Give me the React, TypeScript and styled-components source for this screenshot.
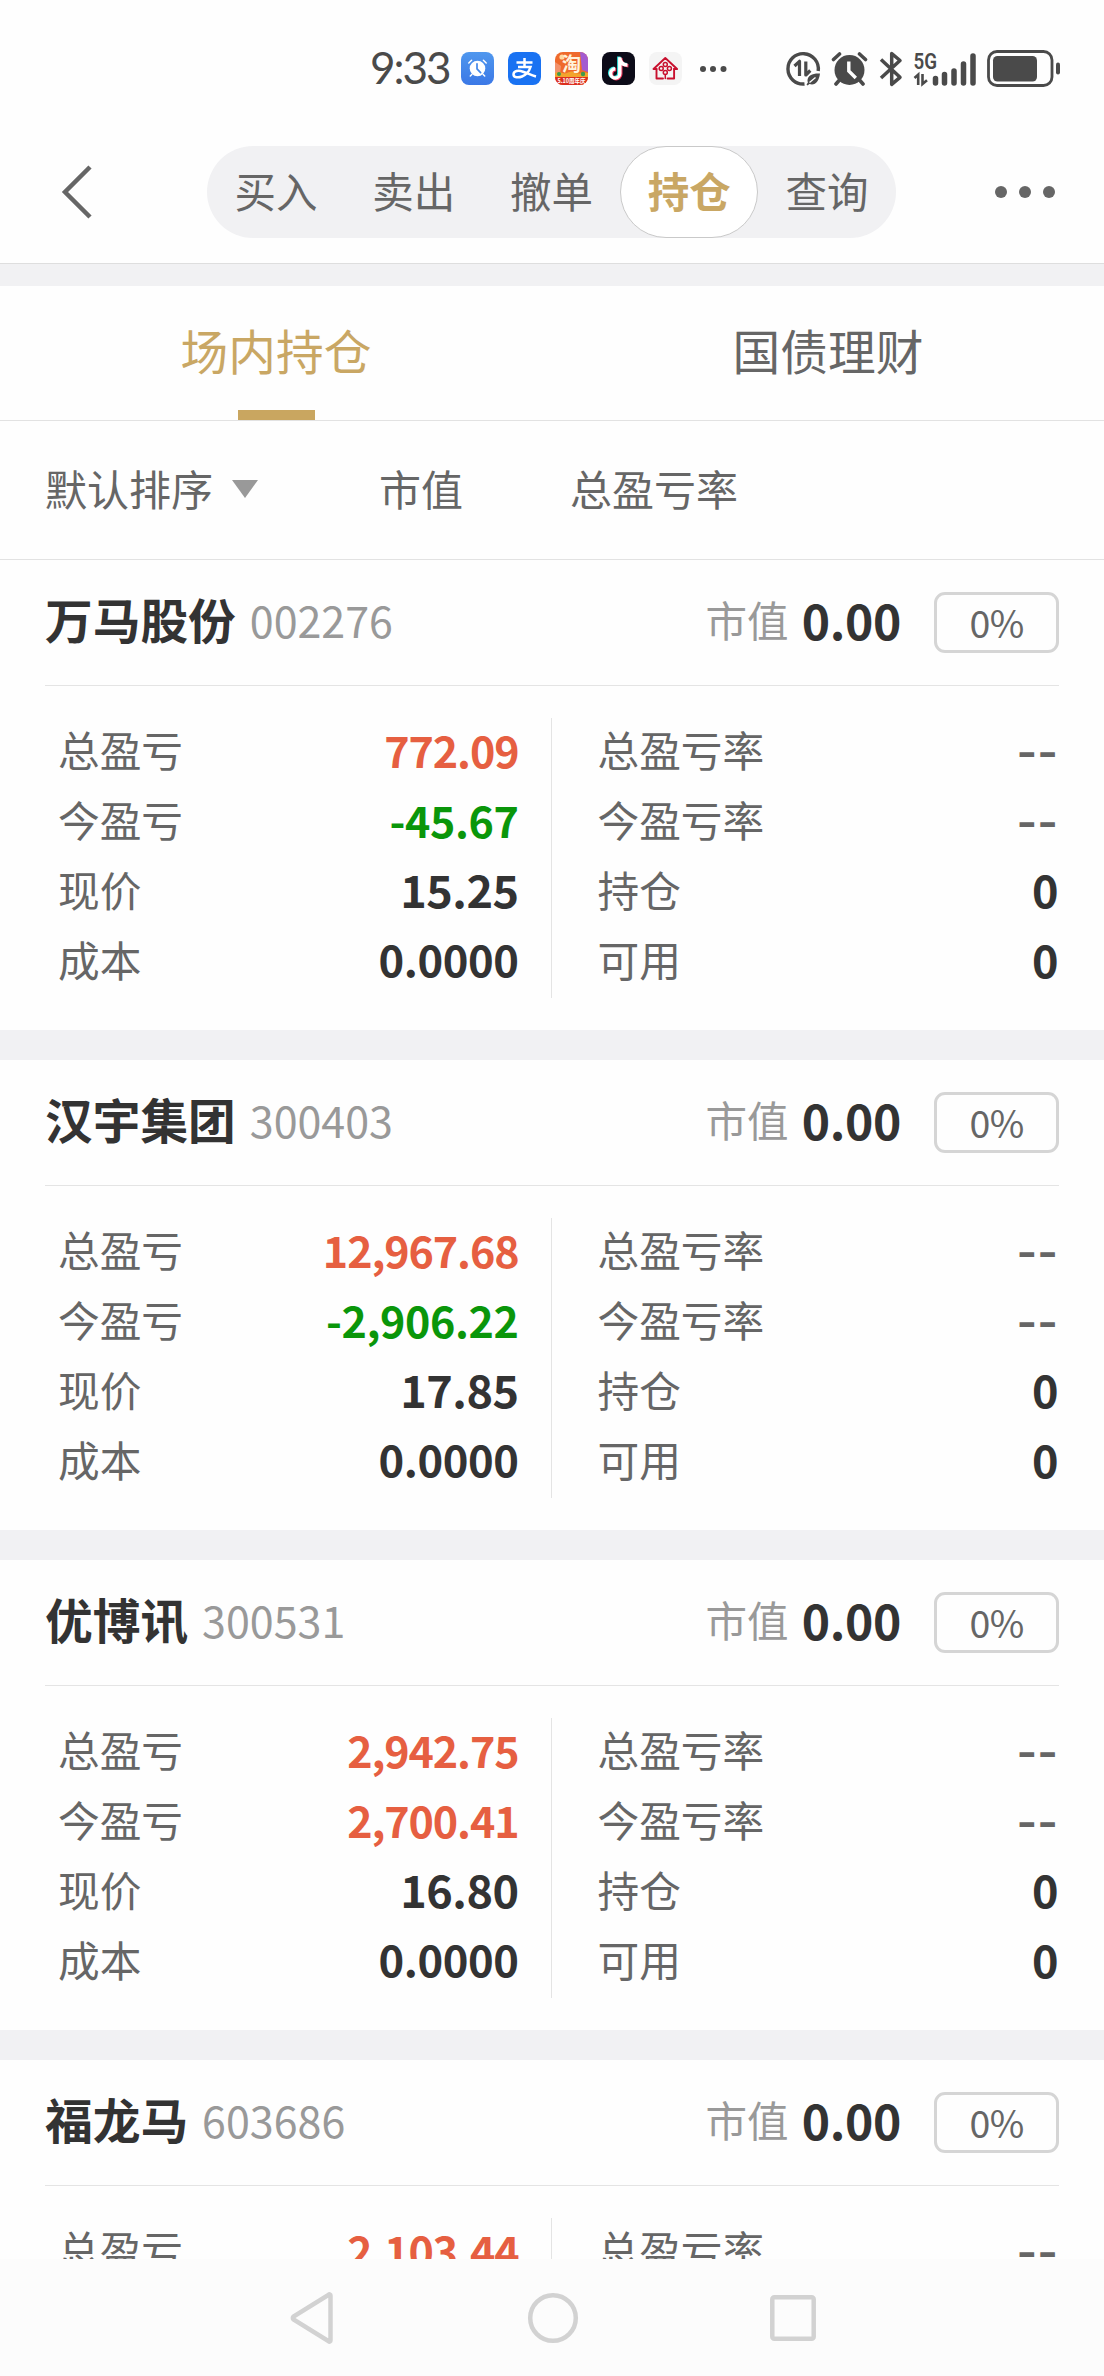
import React from 'react';
import styled, { createGlobalStyle } from 'styled-components';

const Global = createGlobalStyle`
  *, *::before, *::after { box-sizing: border-box; }
  body {
    margin: 0;
    background: #fff;
    color: #666;
    font-family: "Noto Sans CJK SC", "Noto Sans", sans-serif;
  }
`;

const Screen = styled.div`
  width: 1104px;
  height: 2376px;
  display: flex;
  flex-direction: column;
  overflow: hidden;
  background: #fefefe;
`;

const StatusBar = styled.div`
  height: 130px;
  flex: none;
  display: flex;
  align-items: center;
  padding: 7px 40px 0 370px;
`;

const Clock = styled.span`
  width: 91px;
  flex: none;
  font-family: Lato, sans-serif;
  font-size: 44px;
  line-height: 60px;
  color: #4a4a4a;
  letter-spacing: -2px;
  padding-bottom: 3px;
  white-space: nowrap;
`;

const AppIcons = styled.div`
  display: flex;
  gap: 14px;
`;

const Glyph = styled.svg<{ $left?: number }>`
  display: block;
  flex: none;
  margin-left: ${(p) => p.$left ?? 0}px;
`;

const TopNav = styled.div`
  height: 134px;
  flex: none;
  display: flex;
  align-items: center;
  padding: 0 48px 10px 61px;
  border-bottom: 1px solid #dedede;
`;

const Segments = styled.div`
  display: flex;
  width: 690px;
  height: 92px;
  margin: 0 98px 0 114px;
  border-radius: 46px;
  background: #f1f1f3;
`;

const Segment = styled.div<{ $active?: boolean }>`
  flex: 1;
  display: flex;
  align-items: center;
  justify-content: center;
  padding-bottom: 4px;
  font-size: 41.5px;
  line-height: 62px;
  border-radius: 46px;
  border: 1px solid ${(p) => (p.$active ? '#c9c9c9' : 'transparent')};
  background: ${(p) => (p.$active ? '#fff' : 'transparent')};
  color: ${(p) => (p.$active ? '#c9a764' : '#666')};
  font-weight: ${(p) => (p.$active ? 700 : 400)};
`;

const Gap = styled.div<{ $h: number }>`
  height: ${(p) => p.$h}px;
  flex: none;
  background: #f1f1f3;
`;

const Tabs = styled.div`
  display: flex;
  height: 135px;
  flex: none;
  border-bottom: 1px solid #e2e2e2;
`;

const Tab = styled.div<{ $active?: boolean }>`
  flex: 1;
  display: flex;
  flex-direction: column;
  align-items: center;
  justify-content: space-between;
  padding-top: 29px;
  font-size: 47.7px;
  line-height: 70px;
  color: ${(p) => (p.$active ? '#c9a764' : '#666')};
`;

const TabMark = styled.div`
  width: 77px;
  height: 10px;
  background: #c9a660;
`;

const SortBar = styled.div`
  display: flex;
  align-items: center;
  height: 139px;
  flex: none;
  padding: 0 0 4px 45px;
  border-bottom: 1px solid #e2e2e2;
  font-size: 42px;
  line-height: 62px;
`;

const SortItem = styled.div<{ $w: number }>`
  display: flex;
  align-items: center;
  gap: 18px;
  width: ${(p) => p.$w}px;
`;

const List = styled.div`
  flex: 1;
  min-height: 0;
  overflow: hidden;
`;

const Card = styled.section`
  height: 500px;
  border-bottom: 30px solid #f1f1f3;
  padding: 0 45px;
`;

const CardHead = styled.header`
  display: flex;
  align-items: center;
  height: 126px;
  border-bottom: 1px solid #e4e4e4;
`;

const Name = styled.span`
  font-size: 47.7px;
  line-height: 70px;
  font-weight: 700;
  color: #333;
  padding-bottom: 7px;
`;

const Code = styled.span`
  flex: 1;
  margin-left: 14px;
  font-size: 43px;
  line-height: 64px;
  color: #999;
  padding-bottom: 8px;
`;

const ValueLabel = styled.span`
  font-size: 41.5px;
  line-height: 62px;
  color: #999;
  padding-bottom: 7px;
`;

const Value = styled.span`
  margin: 0 33px 0 13px;
  font-size: 48px;
  line-height: 72px;
  font-weight: 700;
  letter-spacing: -0.3px;
  color: #333;
  padding-bottom: 8px;
`;

const Percent = styled.div`
  display: flex;
  align-items: center;
  justify-content: center;
  width: 125px;
  height: 61px;
  margin-top: -1px;
  padding-bottom: 2px;
  border: 3px solid #d5d5d5;
  border-radius: 11px;
  font-size: 37.5px;
  line-height: 53px;
  letter-spacing: -0.6px;
  color: #666;
`;

const CardBody = styled.div`
  display: flex;
  padding-top: 32px;
`;

const Column = styled.div<{ $side: 'left' | 'right' }>`
  flex: 1;
  padding: ${(p) => (p.$side === 'left' ? '0 32px 0 13px' : '0 1px 0 46px')};
  border-right: ${(p) => (p.$side === 'left' ? '1px solid #e4e4e4' : '0')};
`;

const Row = styled.div`
  display: flex;
  align-items: center;
  justify-content: space-between;
  height: 70px;
  padding-bottom: 8px;
  font-size: 41.7px;
  line-height: 62px;
`;

type Tone = 'up' | 'down' | 'cost' | 'plain' | 'muted';

const tones: Record<Tone, { color: string; size: number; weight: number; spacing: number; font: string; drop: number }> = {
  up: { color: '#e65f41', size: 43, weight: 700, spacing: -1.1, font: 'inherit', drop: 0 },
  down: { color: '#0a960a', size: 43, weight: 700, spacing: -0.4, font: 'inherit', drop: 0 },
  cost: { color: '#333', size: 43.5, weight: 700, spacing: -0.4, font: 'inherit', drop: 0 },
  plain: { color: '#333', size: 45, weight: 700, spacing: -0.5, font: 'inherit', drop: 0 },
  muted: { color: '#666', size: 44.5, weight: 600, spacing: 0, font: 'Inter, sans-serif', drop: 6 },
};

const Figure = styled.span<{ $tone: Tone }>`
  padding-top: ${(p) => tones[p.$tone].drop}px;
  font-family: ${(p) => tones[p.$tone].font};
  font-size: ${(p) => tones[p.$tone].size}px;
  font-weight: ${(p) => tones[p.$tone].weight};
  letter-spacing: ${(p) => tones[p.$tone].spacing}px;
  color: ${(p) => tones[p.$tone].color};
`;

const SystemNav = styled.nav`
  display: flex;
  align-items: center;
  justify-content: space-between;
  height: 117px;
  flex: none;
  background: #fcfcfc;
  padding: 0 288px 0 289px;
`;

interface Holding {
  name: string;
  code: string;
  total: string;
  today: string;
  price: string;
}

const holdings: Holding[] = [
  { name: '万马股份', code: '002276', total: '772.09', today: '-45.67', price: '15.25' },
  { name: '汉宇集团', code: '300403', total: '12,967.68', today: '-2,906.22', price: '17.85' },
  { name: '优博讯', code: '300531', total: '2,942.75', today: '2,700.41', price: '16.80' },
];

const lastHolding = { name: '福龙马', code: '603686', total: '2,103.44' };

const toneOf = (v: string): Tone => (v.startsWith('-') ? 'down' : 'up');

const Line = ({ label, value, tone }: { label: string; value: string; tone: Tone }) => (
  <Row>
    <span>{label}</span>
    <Figure $tone={tone}>{value}</Figure>
  </Row>
);

const Head = ({ name, code }: { name: string; code: string }) => (
  <CardHead>
    <Name>{name}</Name>
    <Code>{code}</Code>
    <ValueLabel>市值</ValueLabel>
    <Value>0.00</Value>
    <Percent>0%</Percent>
  </CardHead>
);

const HoldingCard = ({ h }: { h: Holding }) => (
  <Card>
    <Head name={h.name} code={h.code} />
    <CardBody>
      <Column $side="left">
        <Line label="总盈亏" value={h.total} tone={toneOf(h.total)} />
        <Line label="今盈亏" value={h.today} tone={toneOf(h.today)} />
        <Line label="现价" value={h.price} tone="plain" />
        <Line label="成本" value="0.0000" tone="cost" />
      </Column>
      <Column $side="right">
        <Line label="总盈亏率" value="--" tone="muted" />
        <Line label="今盈亏率" value="--" tone="muted" />
        <Line label="持仓" value="0" tone="plain" />
        <Line label="可用" value="0" tone="plain" />
      </Column>
    </CardBody>
  </Card>
);

const INK = '#4a4a4a';

const ClockApp = () => (
  <Glyph width="33" height="33" viewBox="0 0 33 33">
    <defs>
      <linearGradient id="clockBg" x1="0" y1="0" x2="0" y2="1">
        <stop offset="0" stopColor="#4f97ee" />
        <stop offset="1" stopColor="#3b78e6" />
      </linearGradient>
    </defs>
    <rect width="33" height="33" rx="8" fill="url(#clockBg)" />
    <circle cx="16.5" cy="16.5" r="7.8" fill="#fff" />
    <path d="M7.8 11l2.800-2.800M25.200 11l-2.800-2.800M9.300 24l1.500-1.500M23.700 24l-1.500-1.500" stroke="#fff" strokeWidth="1.500" strokeLinecap="round" />
    <path d="M16 11.800v5l3.600 3.800" stroke="#4488ea" strokeWidth="1.700" fill="none" strokeLinecap="round" />
  </Glyph>
);

const PayApp = () => (
  <Glyph width="33" height="33" viewBox="0 0 33 33">
    <rect width="33" height="33" rx="8" fill="#1972f2" />
    <path d="M8.500 10.500h16M16.500 6v9M10 15h12.500c-1.300 4.200-4.600 8-8.500 9.500-3.500 1.400-8.500 1.200-8.500-2 0-3.800 5-4.400 9.500-2.800 4.500 1.500 8 3.500 13 4.800" stroke="#fff" strokeWidth="2.500" fill="none" />
  </Glyph>
);

const ShopApp = () => (
  <Glyph width="33" height="33" viewBox="0 0 33 33">
    <defs>
      <clipPath id="shopClip">
        <rect width="33" height="33" rx="8" />
      </clipPath>
    </defs>
    <g clipPath="url(#shopClip)">
      <rect width="33" height="33" fill="#ef6a2c" />
      <path d="M25 0h8v20l-6-2z" fill="#a35bd0" />
      <path d="M0 10l6 4-1 8-5 1z" fill="#f2926b" />
      <circle cx="7" cy="5" r="2.600" fill="#ffd9a0" />
      <path d="M0 21c5-3 8 2 12 0s6-2 9 0 8-2 12 0v5H0z" fill="#f3a52d" />
      <circle cx="4" cy="22" r="2" fill="#3f9a4c" />
      <circle cx="28" cy="22" r="2.200" fill="#3f9a4c" />
      <rect y="25" width="33" height="8" fill="#dc2f1e" />
    </g>
    <text x="16.500" y="19" fontSize="19" fontWeight="700" textAnchor="middle" fill="#fff3dc">淘</text>
    <text x="2.500" y="31" fontSize="6" fontWeight="700" textLength="28" lengthAdjust="spacingAndGlyphs" fill="#fff">5.10周年庆</text>
  </Glyph>
);

const NOTE = 'M17.600 5v16.200a4.600 4.600 0 1 1-4.600-4.600M17.600 6c.5 4 3.200 6.600 7.600 6.800';

const VideoApp = () => (
  <Glyph width="33" height="33" viewBox="0 0 33 33">
    <rect width="33" height="33" rx="8" fill="#0c0b18" />
    <g fill="none" strokeWidth="3.400">
      <path d={NOTE} stroke="#2fe3de" transform="translate(-.8 -.4)" />
      <path d={NOTE} stroke="#f0365c" transform="translate(1.200 .9)" />
      <path d={NOTE} stroke="#fff" transform="translate(.2 .2)" />
    </g>
  </Glyph>
);

const HouseApp = () => (
  <Glyph width="33" height="33" viewBox="0 0 33 33">
    <rect width="33" height="33" rx="8" fill="#f4f4f4" />
    <g fill="none" stroke="#c8102e" strokeWidth="1.900" strokeLinejoin="round" strokeLinecap="round">
      <path d="M7.500 17H4.500L16.300 6l11.800 11h-3" />
      <path d="M14 26.500H7.500V17M18.600 26.500h6.500V17" />
      <g strokeWidth="1.500">
        <circle cx="16.300" cy="12.400" r="2" />
        <circle cx="16.300" cy="20.600" r="2" />
        <circle cx="12.200" cy="16.500" r="2" />
        <circle cx="20.400" cy="16.500" r="2" />
        <path d="M16.300 22.600v3.900" />
      </g>
    </g>
  </Glyph>
);

const MoreDots = () => (
  <Glyph width="28" height="8" viewBox="0 0 28 8" $left={17}>
    <circle cx="4" cy="4" r="3" fill={INK} />
    <circle cx="14" cy="4" r="3" fill={INK} />
    <circle cx="24.500" cy="4" r="3" fill={INK} />
  </Glyph>
);

const DataSaver = () => (
  <Glyph width="36" height="36" viewBox="0 0 36 36" $left={58}>
    <path d="M19.500 33A15.200 15.200 0 1 1 33.200 20" fill="none" stroke={INK} strokeWidth="3.400" />
    <path d="M9.500 15l5-4.700V25" fill="none" stroke={INK} strokeWidth="3.200" strokeLinejoin="round" />
    <path d="M20.800 10.500V24l4.500-4.500" fill="none" stroke={INK} strokeWidth="3.200" strokeLinejoin="round" />
    <path d="M35 22.500c-7-.5-12.500 2-12.500 7 0 .8.200 1.500.4 2.100l-1.400 2 1.200 1 1.600-1.700c5.700 2 9.700-2.200 10.700-10.400z" fill={INK} />
    <path d="M24.500 31.500l6-5" stroke="#fff" strokeWidth="1.300" />
  </Glyph>
);

const Alarm = () => (
  <Glyph width="37" height="36" viewBox="0 0 37 36" $left={10}>
    <circle cx="18.500" cy="19" r="15" fill={INK} />
    <path d="M2.500 8.500L8.500 3M34.500 8.500L28.500 3M5 33l3.500-4M32 33l-3.500-4" stroke={INK} strokeWidth="3.600" strokeLinecap="round" />
    <path d="M17.800 10.500v9.500l7 7" fill="none" stroke="#fff" strokeWidth="3.400" />
  </Glyph>
);

const Bluetooth = () => (
  <Glyph width="24" height="36" viewBox="0 0 24 36" $left={11}>
    <path d="M2 8.500l19 17.800-8.300 7V2.500l8.300 7L2 27" fill="none" stroke={INK} strokeWidth="3.500" strokeLinejoin="round" />
  </Glyph>
);

const Signal = () => (
  <Glyph width="64" height="38" viewBox="0 0 64 38" $left={10}>
    <text x="0.500" y="18.500" fontSize="22" fontFamily="Roboto, sans-serif" fontWeight="600" textLength="23.500" lengthAdjust="spacingAndGlyphs" fill={INK}>5G</text>
    <path d="M1.500 28l3.700-3.300V35M9.500 24v10l4.500-3.800" fill="none" stroke={INK} strokeWidth="2.600" />
    <path d="M22.500 28.500v4.500M31.500 24.500V33M41 21v12M50.500 14v19M60 6v27" stroke={INK} strokeWidth="5.500" strokeLinecap="round" />
  </Glyph>
);

const Battery = () => (
  <Glyph width="74" height="38" viewBox="0 0 74 38" $left={10}>
    <rect x="1.500" y="1.500" width="63.500" height="34" rx="8.500" fill="none" stroke={INK} strokeWidth="2.800" />
    <rect x="6" y="6" width="44" height="25.500" rx="4.500" fill={INK} />
    <path d="M71 14.500v8" stroke={INK} strokeWidth="4" strokeLinecap="round" />
  </Glyph>
);

export default function App() {
  return (
    <Screen>
      <Global />
      <StatusBar>
        <Clock>9:33</Clock>
        <AppIcons>
          <ClockApp />
          <PayApp />
          <ShopApp />
          <VideoApp />
          <HouseApp />
        </AppIcons>
        <MoreDots />
        <DataSaver />
        <Alarm />
        <Bluetooth />
        <Signal />
        <Battery />
      </StatusBar>

      <TopNav>
        <Glyph width="32" height="54" viewBox="0 0 32 54">
          <path d="M29 2L4 27l25 25" fill="none" stroke="#666" strokeWidth="4.500" />
        </Glyph>
        <Segments>
          <Segment>买入</Segment>
          <Segment>卖出</Segment>
          <Segment>撤单</Segment>
          <Segment $active>持仓</Segment>
          <Segment>查询</Segment>
        </Segments>
        <Glyph width="62" height="14" viewBox="0 0 62 14">
          <circle cx="7" cy="7" r="6" fill="#666" />
          <circle cx="31" cy="7" r="6" fill="#666" />
          <circle cx="55" cy="7" r="6" fill="#666" />
        </Glyph>
      </TopNav>
      <Gap $h={22} />

      <Tabs>
        <Tab $active>
          场内持仓
          <TabMark />
        </Tab>
        <Tab>国债理财</Tab>
      </Tabs>

      <SortBar>
        <SortItem $w={334}>
          默认排序
          <Glyph width="28" height="20" viewBox="0 0 28 20">
            <path d="M1 2h26L14 20z" fill="#999" />
          </Glyph>
        </SortItem>
        <SortItem $w={191}>市值</SortItem>
        <SortItem $w={200}>总盈亏率</SortItem>
      </SortBar>

      <List>
        {holdings.map((h) => (
          <HoldingCard key={h.code} h={h} />
        ))}
        <Card>
          <Head name={lastHolding.name} code={lastHolding.code} />
          <CardBody>
            <Column $side="left">
              <Line label="总盈亏" value={lastHolding.total} tone="up" />
            </Column>
            <Column $side="right">
              <Line label="总盈亏率" value="--" tone="muted" />
            </Column>
          </CardBody>
        </Card>
      </List>

      <SystemNav>
        <Glyph width="46" height="54" viewBox="0 0 46 54">
          <path d="M41.500 4.500v45a1 1 0 0 1-1.700.8L4.500 28.500a2 2 0 0 1 0-3L39.800 3.700a1 1 0 0 1 1.700.8z" fill="none" stroke="#d2d2d2" strokeWidth="4.500" />
        </Glyph>
        <Glyph width="52" height="52" viewBox="0 0 52 52">
          <circle cx="26" cy="26" r="22.800" fill="none" stroke="#d2d2d2" strokeWidth="4.500" />
        </Glyph>
        <Glyph width="46" height="46" viewBox="0 0 46 46">
          <rect x="2.300" y="2.300" width="41.400" height="41.400" rx="2" fill="none" stroke="#d2d2d2" strokeWidth="4.500" />
        </Glyph>
      </SystemNav>
    </Screen>
  );
}
